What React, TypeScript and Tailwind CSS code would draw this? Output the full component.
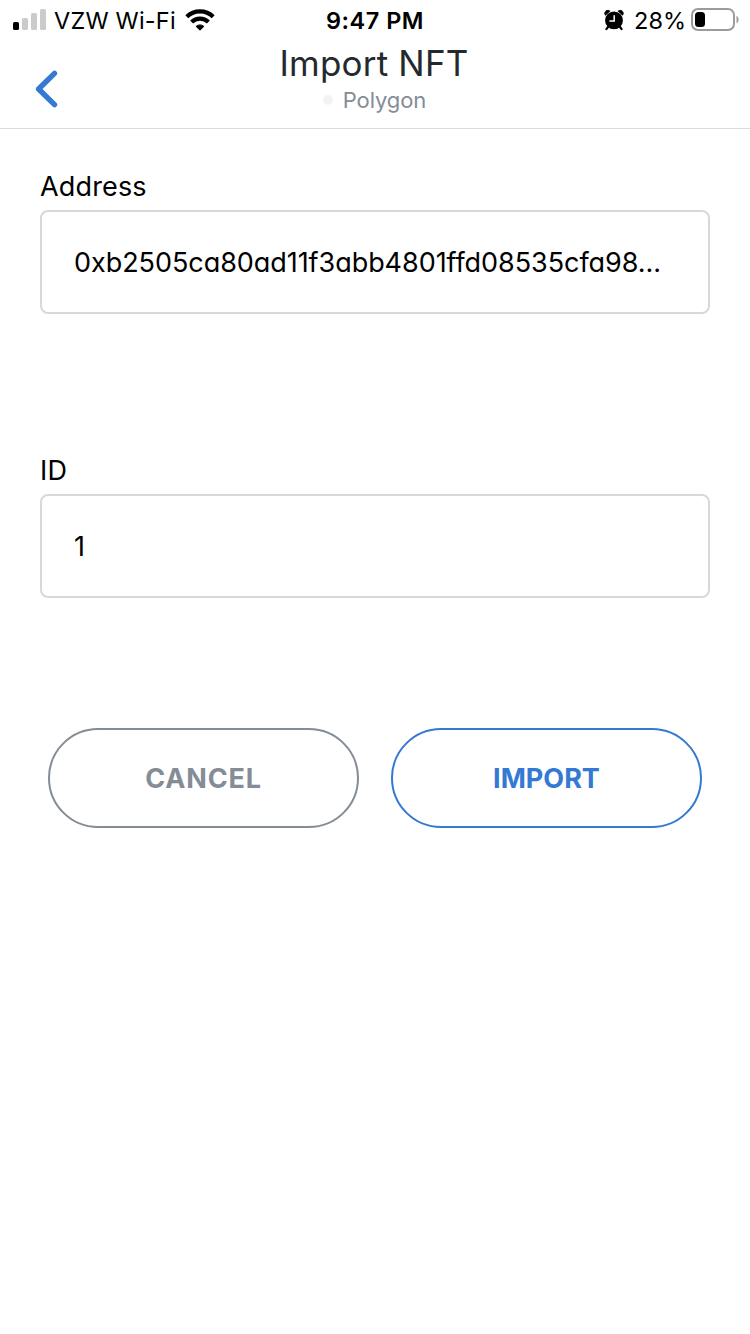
import type { ReactNode } from "react";

function SignalIcon() {
  return (
    <svg width="34" height="22" viewBox="0 0 34 22">
      <rect x="0" y="13" width="6" height="8" rx="1.5" fill="#000" />
      <rect x="9" y="9" width="6" height="12" rx="1.5" fill="#cbcbcb" />
      <rect x="18" y="4" width="6" height="17" rx="1.5" fill="#cbcbcb" />
      <rect x="27" y="0" width="6" height="21" rx="1.5" fill="#cbcbcb" />
    </svg>
  );
}

function WifiIcon() {
  return (
    <svg width="30" height="22" viewBox="0 0 30 22">
      <g fill="none" stroke="#000" strokeWidth="4.2">
        <path d="M1.8 7.8a19 19 0 0 1 26.4 0" />
        <path d="M6.6 13a12.2 12.2 0 0 1 16.8 0" />
      </g>
      <path d="M15 21.2l-3.9-3.8a5.8 5.8 0 0 1 7.8 0z" fill="#000" stroke="#000" strokeWidth="1" strokeLinejoin="round" />
    </svg>
  );
}

function AlarmIcon() {
  return (
    <svg width="20" height="21" viewBox="0 0 20 21">
      <path d="M4.4 16.5l-2 2.6M15.6 16.5l2 2.6" stroke="#000" strokeWidth="2.2" strokeLinecap="round" />
      <path d="M1.4 5.4A3 3 0 0 1 6.2 1.2zM18.6 5.4A3 3 0 0 0 13.8 1.2z" fill="#000" stroke="#000" strokeWidth=".4" />
      <circle cx="10" cy="10.4" r="8.9" fill="#000" />
      <path d="M10.2 5.2v5.7H5.4" fill="none" stroke="#fff" strokeWidth="1.5" />
    </svg>
  );
}

function BatteryIcon() {
  return (
    <svg width="49" height="24" viewBox="0 0 49 24">
      <rect x="1" y="1" width="42" height="21" rx="6" fill="none" stroke="#9b9b9b" strokeWidth="2" />
      <rect x="4" y="4" width="10" height="15" rx="3.5" fill="#000" />
      <path d="M45.5 7.6a4.6 4.6 0 0 1 0 7.8z" fill="#9b9b9b" />
    </svg>
  );
}

function Field({ label, children }: { label: string; children: ReactNode }) {
  return (
    <div className="flex flex-col">
      <span className="h-[42px] text-[27px] leading-[38px] tracking-[0.15px]">{label}</span>
      <div className="flex h-[104px] items-center rounded-lg border-2 border-[#d6d9dc] px-8 pt-[3px] text-[27px] tracking-[-0.05px] whitespace-nowrap">
        {children}
      </div>
    </div>
  );
}

export default function App() {
  return (
    <div className="h-[1334px] w-[750px] bg-white font-['Inter',sans-serif] text-black [font-feature-settings:'cv11','calt'_0]">
      <div className="grid h-10 grid-cols-[1fr_auto_1fr] items-center pr-[10px] pl-[13px] text-[23.5px]">
        <div className="flex items-center">
          <SignalIcon />
          <span className="ml-[7px] pt-[2px] tracking-[0.2px]">VZW Wi-Fi</span>
          <span className="ml-[9px]"><WifiIcon /></span>
        </div>
        <span className="pt-[2px] pr-[3px] font-semibold tracking-[0.5px]">9:47 PM</span>
        <div className="flex items-center justify-end">
          <AlarmIcon />
          <span className="mr-[5px] ml-[10px] pt-[2px]">28%</span>
          <BatteryIcon />
        </div>
      </div>

      <header className="grid h-[89px] grid-cols-[1fr_auto_1fr] border-b border-[#dcdcdc]">
        <button className="mb-5 ml-[35px] flex h-[38px] w-6 self-end" aria-label="Back">
          <svg width="24" height="38" viewBox="0 0 24 38">
            <path d="M19.5 3.3L3.6 19L19.5 34.7" fill="none" className="stroke-[#3479d2]" strokeWidth="5.4" strokeLinecap="round" strokeLinejoin="round" />
          </svg>
        </button>
        <div className="flex flex-col items-center">
          <h1 className="h-[45px] pr-[2px] text-[35px] leading-[47px] tracking-[0.2px] text-[#24292e]">Import NFT</h1>
          <div className="flex items-center gap-[10px] pr-px text-[22px] leading-[30px] tracking-[-0.1px] text-[#848c96]">
            <span className="size-[10px] rounded-full bg-[#f2f3f4]" />
            <span>Polygon</span>
          </div>
        </div>
      </header>

      <main className="flex flex-col px-10 pt-[39px]">
        <Field label="Address">
          <span>0xb2505ca80ad11f3abb4801ffd08535cfa98...</span>
        </Field>
        <div className="mt-[138px]">
          <Field label="ID">
            <span>1</span>
          </Field>
        </div>
        <div className="mt-[130px] grid grid-cols-2 gap-8 px-2 text-[27px] font-bold">
          <button className="h-[100px] rounded-full border-2 border-[#848c96] pt-0.5 tracking-[0.8px] text-[#848c96]">CANCEL</button>
          <button className="h-[100px] rounded-full border-2 border-[#3479d2] pt-0.5 text-[#3479d2]">IMPORT</button>
        </div>
      </main>
    </div>
  );
}
